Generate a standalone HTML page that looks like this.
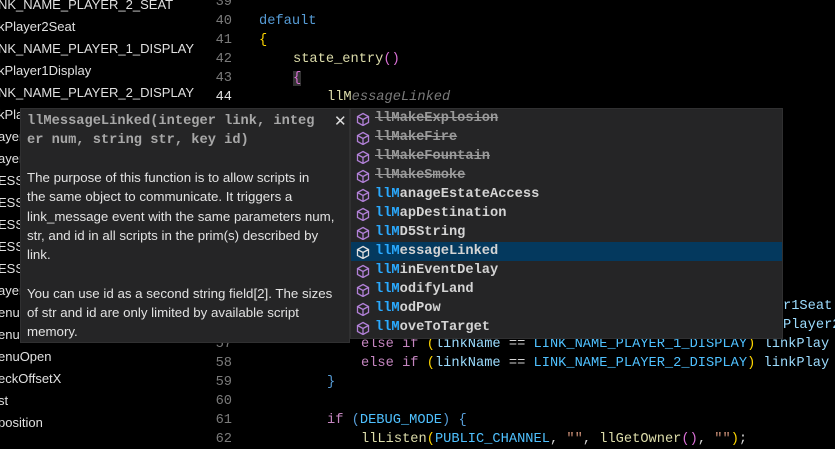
<!DOCTYPE html>
<html><head><meta charset="utf-8"><style>
*{margin:0;padding:0;box-sizing:border-box}
body{width:835px;height:439px;overflow:hidden;background:#000;position:relative;font-family:"Liberation Sans",sans-serif;color:#e6e6e6}
.l{position:absolute;left:-2px;font-size:13px;line-height:22px;white-space:pre;color:#e0e0e0}
.n{position:absolute;width:232px;left:0;text-align:right;font-family:"Liberation Mono",monospace;font-size:13.7px;color:#7a7a7a;line-height:19px}
.c{position:absolute;font-family:"Liberation Mono",monospace;font-size:13.7px;line-height:19px;white-space:pre;color:#d4d4d4}
.k{color:#569cd6}.p{color:#c586c0}.y{color:#ffd700}.b{color:#4fc1ff}.f{color:#dcdcaa}.v{color:#9cdcfe}.s{color:#ce9178}.o{color:#da70d6}
#hov{position:absolute;left:20px;top:108px;width:330px;height:235px;background:#252526;border:1px solid #303031}
#hov .h{position:absolute;left:6px;top:3px;font-family:"Liberation Mono",monospace;font-size:13.7px;line-height:19px;color:#a8a8a8;white-space:pre;font-weight:bold}
#hov .x{position:absolute;left:313px;top:3px;font-size:15px;color:#ddd}
#hov .d{position:absolute;left:6px;top:59px;font-size:13.3px;line-height:19.3px;color:#e2e2e2;white-space:nowrap}
#sug{position:absolute;left:350px;top:108px;width:433px;height:231px;background:#252526;border:1px solid #303031}
.r{position:relative;height:19px;font-family:"Liberation Mono",monospace;font-size:13.7px;line-height:19px;white-space:pre;padding-left:24px;color:#d4d4d4;font-weight:bold}
.r svg{position:absolute;left:5px;top:3px}
.r .m{color:#2aaaff}
.r.del{color:#9a9a9a;text-decoration:line-through}
.r.sel{background:#04395e}
</style></head><body>
<div class="l" style="top:-6px">NK_NAME_PLAYER_2_SEAT</div>
<div class="l" style="top:16px">kPlayer2Seat</div>
<div class="l" style="top:38px">NK_NAME_PLAYER_1_DISPLAY</div>
<div class="l" style="top:60px">kPlayer1Display</div>
<div class="l" style="top:82px">NK_NAME_PLAYER_2_DISPLAY</div>
<div class="l" style="top:104px">kPla</div>
<div class="l" style="top:126px">ayer</div>
<div class="l" style="top:148px">ayer</div>
<div class="l" style="top:170px">ESS.</div>
<div class="l" style="top:192px">ESS.</div>
<div class="l" style="top:214px">ESS.</div>
<div class="l" style="top:236px">ESS.</div>
<div class="l" style="top:258px">ESS.</div>
<div class="l" style="top:280px">ayer</div>
<div class="l" style="top:302px">enu</div>
<div class="l" style="top:324px">enu</div>
<div class="l" style="top:346px">enuOpen</div>
<div class="l" style="top:368px">eckOffsetX</div>
<div class="l" style="top:390px">st</div>
<div class="l" style="top:412px">position</div>

<div class="n" style="top:-7px">39</div>
<div class="n" style="top:12px">40</div>
<div class="n" style="top:31px">41</div>
<div class="n" style="top:50px">42</div>
<div class="n" style="top:69px">43</div>
<div class="n" style="top:88px;color:#e0e0e0">44</div>
<div class="n" style="top:335px">57</div>
<div class="n" style="top:354px">58</div>
<div class="n" style="top:373px">59</div>
<div class="n" style="top:392px">60</div>
<div class="n" style="top:411px">61</div>
<div class="n" style="top:430px">62</div>

<div class="c" style="left:259px;top:12px"><span class="k">default</span></div>
<div class="c" style="left:259px;top:31px"><span class="y">{</span></div>
<div class="c" style="left:293px;top:50px"><span class="f">state_entry</span><span class="o">()</span></div>
<div class="c" style="left:293px;top:69px"><span class="o" style="background:#333">{</span></div>
<div class="c" style="left:327px;top:88px"><span class="f">llM</span><span style="color:#7a7a7a;font-style:italic">essageLinked</span></div>
<div class="c" style="left:783px;top:297px"><span class="v">r1Seat</span></div>
<div class="c" style="left:783px;top:316px"><span class="v">Player2</span></div>
<div class="c" style="left:361px;top:335px"><span class="p">else if</span> <span class="y">(</span><span class="v">linkName</span> == <span class="b">LINK_NAME_PLAYER_1_DISPLAY</span><span class="y">)</span> <span class="v">linkPlay</span></div>
<div class="c" style="left:361px;top:354px"><span class="p">else if</span> <span class="y">(</span><span class="v">linkName</span> == <span class="b">LINK_NAME_PLAYER_2_DISPLAY</span><span class="y">)</span> <span class="v">linkPlay</span></div>
<div class="c" style="left:327px;top:373px"><span class="k">}</span></div>
<div class="c" style="left:327px;top:411px"><span class="p">if</span> <span class="k">(</span><span class="b">DEBUG_MODE</span><span class="k">)</span> <span class="k">{</span></div>
<div class="c" style="left:361px;top:430px"><span class="f">llListen</span><span class="y">(</span><span class="b">PUBLIC_CHANNEL</span>, <span class="s">""</span>, <span class="f">llGetOwner</span><span class="o">()</span>, <span class="s">""</span><span class="y">)</span>;</div>

<div id="hov">
<div class="h">llMessageLinked(integer link, integ
er num, string str, key id)</div>
<div class="x">✕</div>
<div class="d">The purpose of this function is to allow scripts in<br>the same object to communicate. It triggers a<br>link_message event with the same parameters num,<br>str, and id in all scripts in the prim(s) described by<br>link.<br><br>You can use id as a second string field[2]. The sizes<br>of str and id are only limited by available script<br>memory.</div>
</div>

<svg width="0" height="0" style="position:absolute"><defs><g id="cube"><path d="M7 1.5 L12.5 4.5 V10.5 L7 13.5 L1.5 10.5 V4.5 Z M1.5 4.5 L7 7.5 L12.5 4.5 M7 7.5 V13.5" fill="none" stroke-width="1.3"/></g></defs></svg>
<div id="sug">
<div class="r del"><svg width="14" height="14" stroke="#b180d7"><use href="#cube"/></svg>llMakeExplosion</div>
<div class="r del"><svg width="14" height="14" stroke="#b180d7"><use href="#cube"/></svg>llMakeFire</div>
<div class="r del"><svg width="14" height="14" stroke="#b180d7"><use href="#cube"/></svg>llMakeFountain</div>
<div class="r del"><svg width="14" height="14" stroke="#b180d7"><use href="#cube"/></svg>llMakeSmoke</div>
<div class="r"><svg width="14" height="14" stroke="#b180d7"><use href="#cube"/></svg><span class="m">llM</span>anageEstateAccess</div>
<div class="r"><svg width="14" height="14" stroke="#b180d7"><use href="#cube"/></svg><span class="m">llM</span>apDestination</div>
<div class="r"><svg width="14" height="14" stroke="#b180d7"><use href="#cube"/></svg><span class="m">llM</span>D5String</div>
<div class="r sel"><svg width="14" height="14" stroke="#e0e0e0"><use href="#cube"/></svg><span class="m">llM</span>essageLinked</div>
<div class="r"><svg width="14" height="14" stroke="#b180d7"><use href="#cube"/></svg><span class="m">llM</span>inEventDelay</div>
<div class="r"><svg width="14" height="14" stroke="#b180d7"><use href="#cube"/></svg><span class="m">llM</span>odifyLand</div>
<div class="r"><svg width="14" height="14" stroke="#b180d7"><use href="#cube"/></svg><span class="m">llM</span>odPow</div>
<div class="r"><svg width="14" height="14" stroke="#b180d7"><use href="#cube"/></svg><span class="m">llM</span>oveToTarget</div>
</div>
</body></html>
